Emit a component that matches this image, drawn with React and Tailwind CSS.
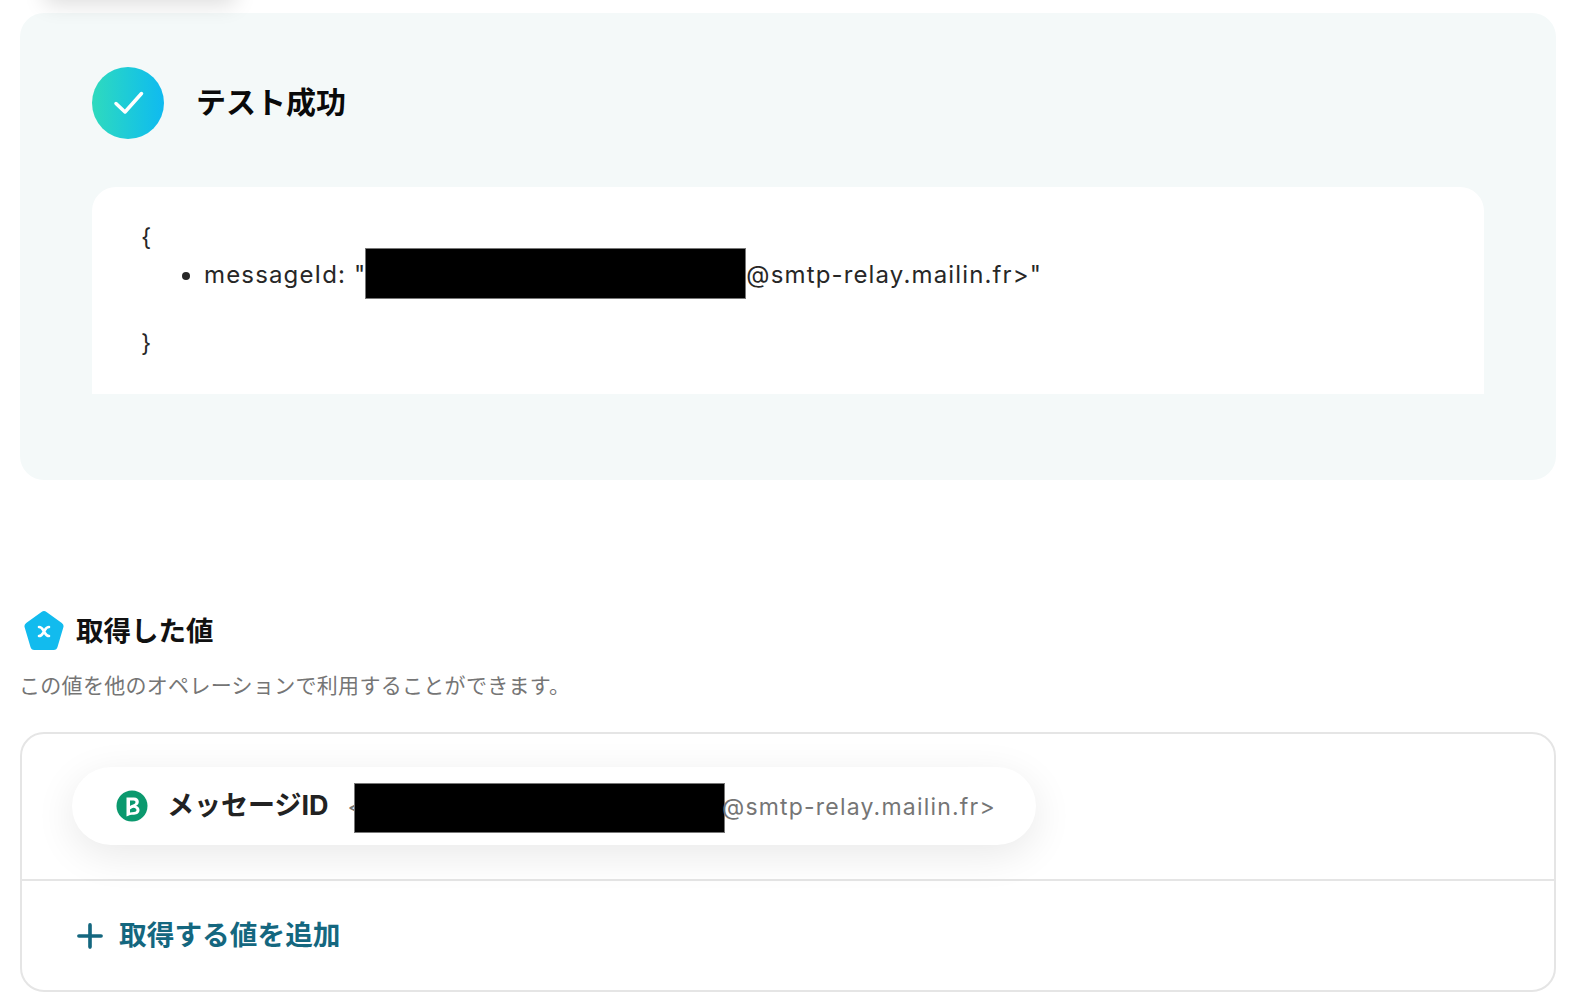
import React from 'react';
import { Plus } from 'lucide-react';

const font = { fontFamily: '"Inter", "Noto Sans CJK JP", sans-serif' };

function Redacted({ className }) {
  return <span className={`inline-block bg-black border border-[#777] ${className}`} />;
}

function PentagonIcon() {
  return (
    <svg width="40" height="39" viewBox="0 0 40 39" className="shrink-0 -mt-[2px]">
      <path
        d="M17.500 1a4.200 4.200 0 0 1 5 0l15.300 11a4 4 0 0 1 1.500 4.500l-5.800 19.500a4 4 0 0 1-3.800 3H10.300a4 4 0 0 1-3.800-3L.700 16.500a4 4 0 0 1 1.500-4.500z"
        fill="#12bbee"
      />
      <path d="M15 16c3 0 3.200 1.600 5 4.500s2 4.500 5 4.500M25 16c-3 0-3.200 1.600-5 4.500s-2 4.500-5 4.500" stroke="#fff" strokeWidth="2.600" fill="none" strokeLinecap="round" />
    </svg>
  );
}

function BrevoIcon() {
  return (
    <svg width="32" height="32" viewBox="0 0 32 32" className="shrink-0">
      <ellipse cx="16" cy="16" rx="15.500" ry="15.500" fill="#0b996e" />
      <path d="M10.500 7.500h7.500c3 0 4.800 1.800 4.800 4.300 0 2-1 3.200-2.700 4 2.300.8 3.400 2.300 3.400 4.300 0 3-2.400 4.600-5.500 4.600-3 0-5 .3-7.500 1.800z" fill="#fff" />
      <path d="M14 10.500h3.500c1.400 0 2 .7 2 1.800 0 1.300-1.200 2-3 2.500-1 .3-1.800.7-2.500 1.200zM14 19.500c1-.8 2-1.500 3.500-1.800 1.700.3 3 1 3 2.400 0 1.200-1 1.900-2.500 1.900-1.600 0-2.900.2-4 .6z" fill="#0b996e" />
    </svg>
  );
}

export default function App() {
  return (
    <div style={font} className="relative bg-white w-[1570px] h-[1000px] overflow-hidden pl-[20px] pr-[14px] pt-[13px]">
      {/* edge of the card scrolled off above the panel */}
      <div className="absolute left-[45px] top-[-50px] w-[190px] h-[50px] shadow-[0_4px_22px_rgba(0,0,0,0.14)]" />

      <section className="bg-[#f4f9f9] rounded-[24px] h-[467px] px-[72px] pt-[54px]">
        <div className="flex items-center gap-[32px]">
          <div className="w-[72px] h-[72px] rounded-full bg-gradient-to-r from-[#2fdabd] to-[#10baf0] flex items-center justify-center">
            <svg width="32" height="26" viewBox="0 0 32 26" fill="none" className="ml-[2px]">
              <path d="M3 13.500 L12 22 L28.500 3.500" stroke="#fff" strokeWidth="3.500" strokeLinecap="round" strokeLinejoin="round" />
            </svg>
          </div>
          <h2 className="text-[30px] leading-[40px] font-bold text-[#0a0a0a] -mt-[2px]">テスト成功</h2>
        </div>

        <div className="mt-[48px] bg-white rounded-t-[24px] h-[207px] pl-[49px] pt-[34px] text-[24px] leading-[34px] text-[#272727] tracking-[1.15px]">
          <div>{'{'}</div>
          <ul className="list-disc pl-[63px] mt-[3px]">
            <li>
              <span className="flex items-center h-[34px]">
                messageId: "
                <Redacted className="w-[381px] h-[51px] -ml-[1px] -mt-[3px]" />
                @smtp-relay.mailin.fr&gt;"
              </span>
            </li>
          </ul>
          <div className="mt-[35px]">{'}'}</div>
        </div>
      </section>

      <section className="mt-[130px]">
        <div className="flex items-center gap-[12px] h-[42px] pl-[4px]">
          <PentagonIcon />
          <h3 className="text-[27.5px] font-bold text-[#111] leading-[40px]">取得した値</h3>
        </div>
        <p className="mt-[19px] -ml-[1px] text-[21px] leading-[30px] text-[#757575] tracking-[0.3px]">この値を他のオペレーションで利用することができます。</p>

        <div className="mt-[31px] border-2 border-[#e5e5e5] rounded-[24px] h-[260px] overflow-hidden">
          <div className="h-[147px] border-b-2 border-[#e5e5e5] pl-[50px] pt-[33px]">
            <div className="inline-flex items-center w-[964px] h-[78px] bg-white rounded-full shadow-[0_10px_40px_rgba(0,0,0,0.09)] pl-[44px]">
              <BrevoIcon />
              <span className="ml-[19px] text-[27px] font-bold text-[#222]">メッセージID</span>
              <span className="ml-[19px] flex items-center text-[23px] text-[#757575] tracking-[1.2px] mt-[2px]">
                &lt;
                <Redacted className="w-[371px] h-[50px] -ml-[10px] mt-[2px]" />
                <span className="-ml-[3px]">@smtp-relay.mailin.fr&gt;</span>
              </span>
            </div>
          </div>
          <button className="flex items-center h-[109px] pl-[49px] text-[#14677f]">
            <Plus size={38} strokeWidth={2.3} />
            <span className="ml-[10px] text-[27.7px] font-bold">取得する値を追加</span>
          </button>
        </div>
      </section>
    </div>
  );
}
